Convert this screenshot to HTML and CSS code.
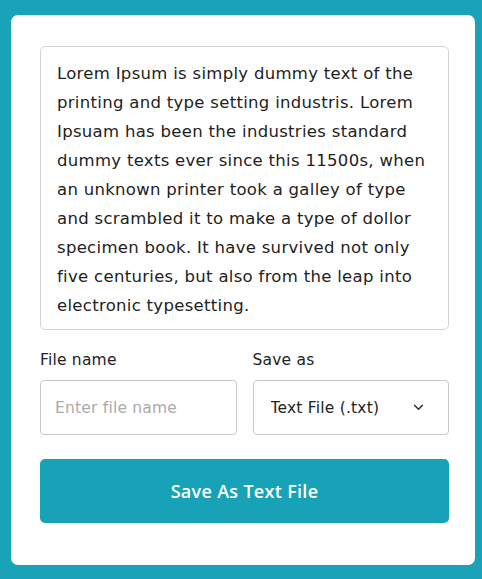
FILE: index.html
```html
<!DOCTYPE html>
<html lang="en">
<head>
  <meta charset="UTF-8" />
  <meta name="viewport" content="width=device-width, initial-scale=1.0"/>
  <title>Save Text As File</title>
  <link rel="stylesheet" href="styles.css">
</head>
<body>
  <div class="wrapper">
    <textarea class="editor" spellcheck="false">Lorem Ipsum is simply dummy text of the printing and type setting industris. Lorem Ipsuam has been the industries standard dummy texts ever since this 11500s, when an unknown printer took a galley of type and scrambled it to make a type of dollor specimen book. It have survived not only five centuries, but also from the leap into electronic typesetting.</textarea>

    <div class="file-options">
      <div class="option">
        <label for="file-name">File name</label>
        <input type="text" id="file-name" placeholder="Enter file name">
      </div>
      <div class="option">
        <label for="save-as">Save as</label>
        <div class="select-box">
          <select id="save-as">
            <option value="text/plain">Text File (.txt)</option>
            <option value="text/javascript">JS File (.js)</option>
            <option value="text/html">HTML File (.html)</option>
          </select>
          <svg class="chevron" viewBox="0 0 12 8" width="11" height="7">
            <path d="M1.5 1.5 6 6l4.5-4.5" fill="none" stroke="#333" stroke-width="1.8" stroke-linecap="round" stroke-linejoin="round"/>
          </svg>
        </div>
      </div>
    </div>

    <button class="save-btn">Save As Text File</button>
  </div>
</body>
</html>
```

FILE: styles.css
```css
* {
  box-sizing: border-box;
}

body {
  margin: 0;
  padding: 15px 7px 0 11px;
  background: #1aa2b8;
  font-family: 'DejaVu Sans', sans-serif;
  letter-spacing: 0.2px;
  color: #222;
}

.wrapper {
  width: 464px;
  height: 550px;
  background: #fff;
  border-radius: 7px;
  padding: 31px 26px 0 29px;
}

.editor {
  display: block;
  width: 100%;
  height: 284px;
  resize: none;
  border: 1px solid #d4d4d4;
  border-radius: 5px;
  padding: 12px 16px;
  font-family: inherit;
  font-size: 16.5px;
  letter-spacing: 0.3px;
  line-height: 29px;
  color: #222;
  outline: none;
  overflow: hidden;
}

.file-options {
  display: flex;
  gap: 16px;
  margin-top: 18px;
}

.option {
  flex: 1;
}

.option label {
  display: block;
  font-size: 15.5px;
  line-height: 24px;
  margin-bottom: 8px;
  color: #222;
}

.option input,
.option select {
  display: block;
  width: 100%;
  height: 55px;
  border: 1px solid #c8c8c8;
  border-radius: 4px;
  font-family: inherit;
  font-size: 15.5px;
  letter-spacing: inherit;
  color: #222;
  background: #fff;
  outline: none;
}

.option input {
  padding: 0 14px;
}

.option input::placeholder {
  color: #aaa;
}

.select-box {
  position: relative;
}

.option select {
  appearance: none;
  padding: 0 17px;
}

.chevron {
  position: absolute;
  right: 25px;
  top: 24px;
  pointer-events: none;
}

.save-btn {
  display: block;
  width: 100%;
  height: 64px;
  margin-top: 24px;
  border: none;
  border-radius: 5px;
  background: #17a2b8;
  color: #fff;
  font-family: 'Open Sans', sans-serif;
  font-size: 18px;
  font-weight: 600;
  letter-spacing: 0.3px;
  cursor: pointer;
}
```
